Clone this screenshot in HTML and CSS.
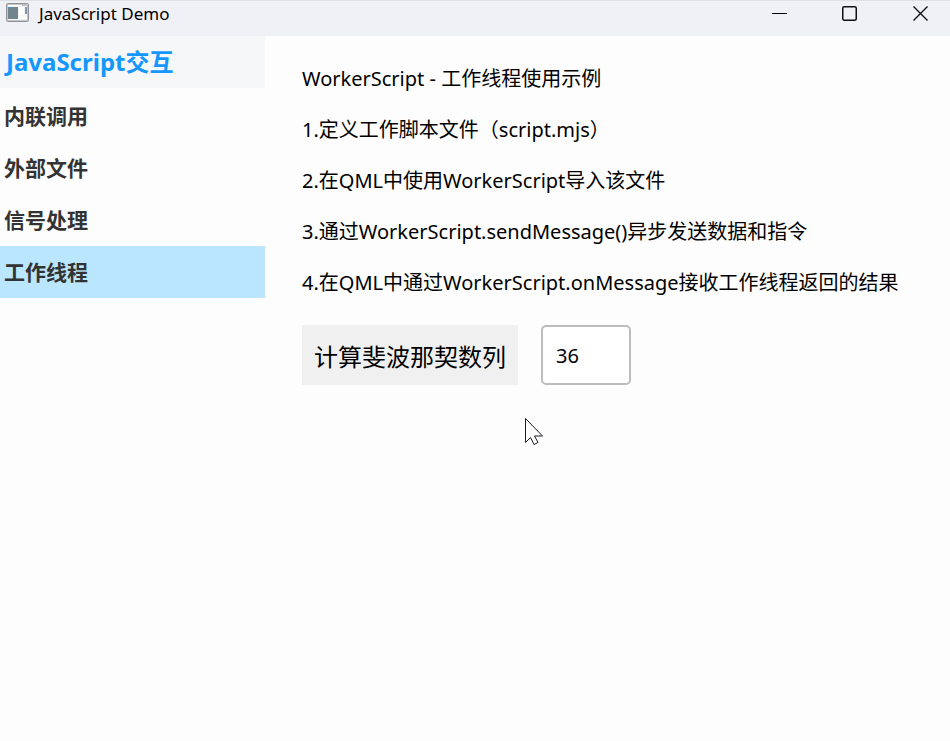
FILE: index.html
```html
<!DOCTYPE html>
<html lang="zh-CN">
<head>
  <meta charset="UTF-8">
  <meta name="viewport" content="width=device-width, initial-scale=1.0">
  <title>JavaScript Demo</title>
  <link rel="stylesheet" href="styles.css">
</head>
<body>
  <header class="titlebar">
    <svg class="app-icon" width="24" height="20" viewBox="0 0 24 20">
      <rect x="0.500" y="0.500" width="22" height="18" rx="1" fill="#f4f4f4" stroke="#8f9397"/>
      <rect x="1.500" y="1.500" width="20" height="16" fill="none" stroke="#c3c5c7"/>
      <path d="M2 2.500h14" stroke="#fff"/>
      <path d="M16 2.500h5" stroke="#b9bcc0"/>
      <rect x="2" y="4" width="10" height="12" fill="#72858f"/>
      <path d="M2 4.500h4" stroke="#3f8ee0"/>
      <rect x="13" y="4" width="5" height="8" fill="#fff"/>
      <rect x="19" y="4" width="2" height="7" fill="#8298a8"/>
      <path d="M13 14.500h8" stroke="#fff" stroke-width="2"/>
    </svg>
    <span class="title">JavaScript Demo</span>
    <div class="window-buttons">
      <button type="button" aria-label="Minimize">
        <svg width="17" height="17" viewBox="0 0 17 17"><path d="M2 7.500h15" stroke="#000"/></svg>
      </button>
      <button type="button" aria-label="Maximize">
        <svg width="17" height="17" viewBox="0 0 17 17"><rect x="1.750" y="0.750" width="13.500" height="13.500" rx="1.500" fill="none" stroke="#111" stroke-width="1.500"/></svg>
      </button>
      <button type="button" aria-label="Close">
        <svg width="17" height="17" viewBox="0 0 17 17"><path d="M1.500 0.500l14 14M15.500 0.500l-14 14" stroke="#111" stroke-width="1.400"/></svg>
      </button>
    </div>
  </header>

  <div class="window">
    <nav class="sidebar">
      <h1>JavaScript交互</h1>
      <a href="#inline">内联调用</a>
      <a href="#file">外部文件</a>
      <a href="#signal">信号处理</a>
      <a href="#worker" class="active">工作线程</a>
    </nav>

    <main class="content">
      <p>WorkerScript - 工作线程使用示例</p>
      <p>1.定义工作脚本文件（script.mjs）</p>
      <p>2.在QML中使用WorkerScript导入该文件</p>
      <p>3.通过WorkerScript.sendMessage()异步发送数据和指令</p>
      <p>4.在QML中通过WorkerScript.onMessage接收工作线程返回的结果</p>
      <form class="controls">
        <button type="button" class="run">计算斐波那契数列</button>
        <input type="text" class="number" value="36" aria-label="数列项数">
      </form>
    </main>
  </div>

  <svg class="pointer" width="20" height="28" viewBox="0 0 20 28">
    <path d="M1.500 1.500v24l5-5 3.500 7 4-2-3.500-6.500h8z" fill="#fff" stroke="#1b1b28"/>
  </svg>
</body>
</html>
```
FILE: styles.css
```css
* {
  box-sizing: border-box;
}
body {
  margin: 0;
  min-height: 100vh;
  background: #fdfdfd;
  color: #000;
  font-family: "Noto Sans", "Noto Sans CJK SC", sans-serif;
}
.titlebar {
  display: flex;
  align-items: flex-start;
  height: 36px;
  padding-left: 6px;
  background: #f0f1f7;
  border-top: 1px solid #dedfe3;
}
.app-icon {
  margin-top: 2px;
}
.title {
  margin-left: 9px;
  font-size: 17px;
  line-height: 26px;
}
.window-buttons {
  display: flex;
  gap: 54px;
  margin-left: auto;
  padding: 5px 21px 0 0;
}
.window-buttons button {
  display: flex;
  padding: 0;
  border: none;
  background: none;
}

.window {
  display: flex;
}
.sidebar {
  flex: 0 0 265px;
  display: flex;
  flex-direction: column;
}
.sidebar h1 {
  margin: 0 0 2px;
  padding-left: 6px;
  background: #f5f7f9;
  color: #1696ff;
  font-size: 24px;
  line-height: 52px;
}
.sidebar a {
  padding-left: 4px;
  color: #333;
  font-size: 21px;
  font-weight: bold;
  line-height: 52px;
  text-decoration: none;
}
.sidebar a.active {
  background: #bbe6ff;
}

.content {
  flex: 1;
  padding: 17px 20px 0 37px;
}
.content p {
  margin: 0;
  font-size: 20px;
  line-height: 51px;
}
.controls {
  display: flex;
  gap: 23px;
  margin-top: 17px;
}
.run {
  height: 60px;
  padding: 0 12px;
  border: none;
  background: #f0f0f0;
  color: #000;
  font-family: inherit;
  font-size: 24px;
}
.number {
  width: 90px;
  height: 60px;
  padding: 0 13px;
  border: 2px solid #bdbdbd;
  border-radius: 5px;
  background: #fff;
  color: #000;
  font-family: inherit;
  font-size: 20px;
}

/* mouse pointer over the window */
.pointer {
  position: absolute;
  left: 524px;
  top: 417px;
}
```
